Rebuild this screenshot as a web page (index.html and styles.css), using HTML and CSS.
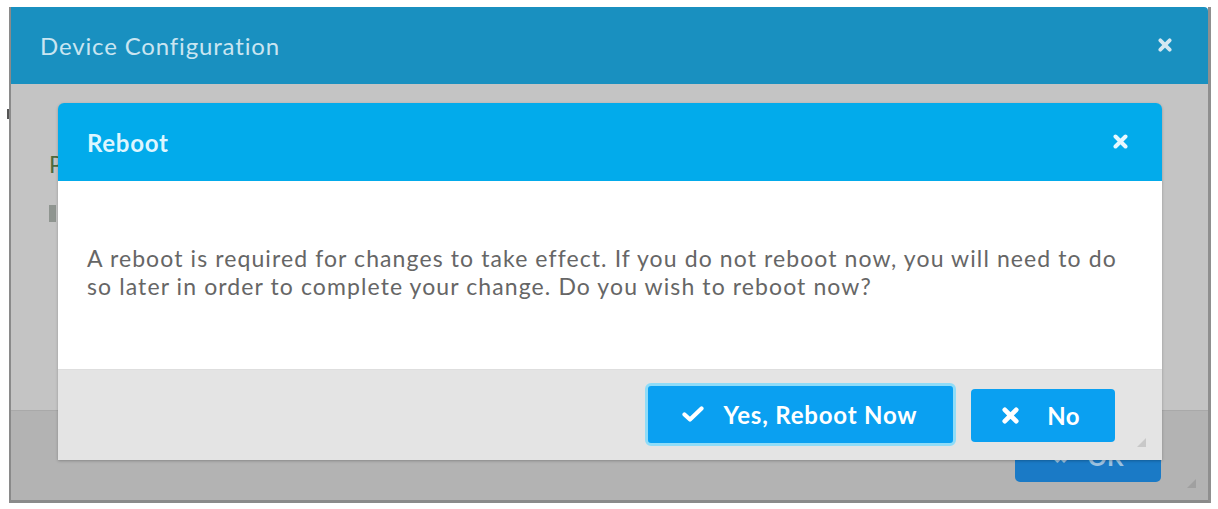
FILE: index.html
```html
<!DOCTYPE html>
<html>
<head>
<meta charset="utf-8">
<link rel="stylesheet" href="styles.css">
</head>
<body>
<div class="stray"></div>
<div class="win">
  <div class="win-head">
    <span class="win-title">Device Configuration</span>
    <svg class="x-icon" width="14" height="14" viewBox="0 0 12 12"><path d="M2 2L10 10M10 2L2 10" stroke="#d4e8f1" stroke-width="3.2" stroke-linecap="round"/></svg>
  </div>
  <div class="win-body">
    <div class="bg-label">P</div>
    <div class="bg-box"></div>
  </div>
  <div class="win-foot">
    <div class="ok-btn"><span class="ok-x">&#10006;</span> OK</div>
    <div class="grip"></div>
  </div>

  <div class="dlg">
    <div class="dlg-head">
      <span class="dlg-title">Reboot</span>
      <svg class="x-icon" width="15" height="15" viewBox="0 0 12 12"><path d="M2 2L10 10M10 2L2 10" stroke="#e6f8ff" stroke-width="3.2" stroke-linecap="round"/></svg>
    </div>
    <div class="dlg-body">
      <p class="msg">A reboot is required for changes to take effect. If you do not reboot now, you will need to do so later in order to complete your change. Do you wish to reboot now?</p>
    </div>
    <div class="dlg-foot">
      <button class="btn btn-yes">
        <svg width="22" height="16" viewBox="0 0 22 16"><path d="M2.5 8.5L8 13.5L19.5 2.5" fill="none" stroke="#ffffff" stroke-width="4.2" stroke-linecap="round" stroke-linejoin="round"/></svg>
        <span>Yes, Reboot Now</span>
      </button>
      <button class="btn btn-no">
        <svg width="17" height="17" viewBox="0 0 12 12"><path d="M2 2L10 10M10 2L2 10" stroke="#ffffff" stroke-width="3.4" stroke-linecap="round"/></svg>
        <span>No</span>
      </button>
      <div class="grip grip-in"></div>
    </div>
  </div>
</div>
</body>
</html>
```

FILE: styles.css
```css
html, body {
  margin: 0;
  padding: 0;
  background: #ffffff;
}
body {
  font-family: Lato, "Open Sans", sans-serif;
  position: relative;
  width: 1218px;
  height: 509px;
  overflow: hidden;
}
.stray {
  position: absolute;
  left: 7px;
  top: 109px;
  width: 3px;
  height: 10px;
  background: #555;
}
.win {
  position: relative;
  margin: 7px 0 0 9px;
  width: 1202px;
  height: 496px;
  box-sizing: border-box;
  border-left: 2px solid #8a8a8a;
  border-right: 3px solid #8f8f8f;
  border-bottom: 3px solid #8a8a8a;
  display: flex;
  flex-direction: column;
}
.win-head {
  height: 77px;
  flex: none;
  background: #1990c0;
  display: flex;
  align-items: center;
  justify-content: space-between;
  padding: 0 36px 0 29px;
  border-top-right-radius: 4px;
}
.win-title {
  color: #c9e5f1;
  font-size: 24px;
  letter-spacing: 0.85px;
}
.win-head .x-icon { position: relative; top: -1px; }
.win-body {
  flex: none;
  height: 326px;
  background: #c4c4c4;
  position: relative;
}
.bg-label {
  position: absolute;
  left: 38px;
  top: 66px;
  color: #4d6a3c;
  font-size: 23px;
}
.bg-box {
  position: absolute;
  left: 38px;
  top: 121px;
  width: 7px;
  height: 17px;
  background: #8f9590;
}
.win-foot {
  flex: 1;
  background: #b3b3b3;
  border-top: 1px solid #a9a9a9;
  position: relative;
  display: flex;
  justify-content: flex-end;
  align-items: flex-start;
  padding: 19px 47px 0 0;
}
.ok-btn {
  width: 146px;
  height: 52px;
  border-radius: 5px;
  background: #1a7ac6;
  color: #9cc2e0;
  font-weight: bold;
  font-size: 24px;
  display: flex;
  align-items: center;
  justify-content: center;
  gap: 20px;
}
.ok-x { font-size: 18px; }
.grip {
  position: absolute;
  right: 12px;
  bottom: 12px;
  width: 0;
  height: 0;
  border-left: 9px solid transparent;
  border-bottom: 9px solid #a0a0a0;
}
.dlg {
  position: absolute;
  left: 47px;
  top: 96px;
  width: 1104px;
  height: 357px;
  display: flex;
  flex-direction: column;
  border-radius: 6px 6px 0 0;
  box-shadow: 0 1px 3px rgba(0,0,0,0.25);
  overflow: hidden;
}
.dlg-head {
  height: 78px;
  flex: none;
  background: #02abeb;
  display: flex;
  align-items: center;
  justify-content: space-between;
  padding: 0 34px 0 29px;
}
.dlg-title {
  color: #def6ff;
  font-size: 24px;
  font-weight: bold;
  letter-spacing: 0.7px;
}
.dlg-head .x-icon { position: relative; top: -1px; }
.dlg-body {
  height: 188px;
  flex: none;
  background: #ffffff;
  padding: 0 40px 0 29px;
  box-sizing: border-box;
  display: flex;
  align-items: center;
}
.msg {
  margin: 0;
  color: #666666;
  font-size: 23px;
  letter-spacing: 1.1px;
  line-height: 28px;
  position: relative;
  top: -3px;
}
.dlg-foot {
  flex: 1;
  background: #e4e4e4;
  border-top: 1px solid #dedede;
  display: flex;
  align-items: center;
  justify-content: flex-end;
  gap: 15px;
  padding-right: 47px;
  position: relative;
}
.btn {
  border: none;
  border-radius: 4px;
  background: #0aa0f1;
  color: #ffffff;
  font-family: Lato, "Open Sans", sans-serif;
  font-weight: bold;
  font-size: 24px;
  letter-spacing: 0.2px;
  display: flex;
  align-items: center;
  justify-content: center;
  padding: 0;
  box-sizing: border-box;
}
.btn-yes {
  width: 311px;
  height: 63px;
  border: 3px solid #8fdcf8;
  gap: 20px;
  letter-spacing: 0.8px;
  padding-right: 2px;
  border-radius: 6px;
  position: relative;
  top: -1px;
}
.btn-no {
  width: 144px;
  height: 53px;
  gap: 28px;
  padding-right: 4px;
}
.grip-in {
  right: 16px;
  bottom: 13px;
  border-left: 9px solid transparent;
  border-bottom: 9px solid #c8c8c8;
}
```
